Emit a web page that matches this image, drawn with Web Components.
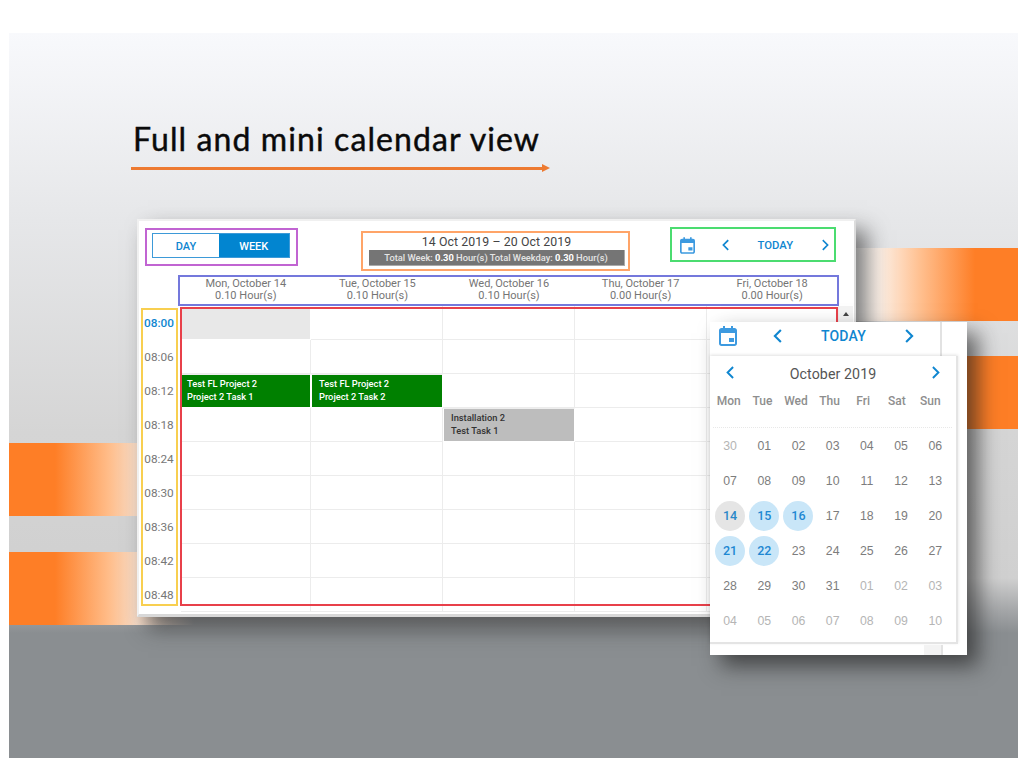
<!DOCTYPE html>
<html>
<head>
<meta charset="utf-8">
<title>Full and mini calendar view</title>
<style>
  html, body { margin: 0; background: #fff; }
  body { width: 1024px; height: 768px; overflow: hidden; font-family: Roboto, "Liberation Sans", sans-serif; }
</style>
</head>
<body>
<slide-frame heading="Full and mini calendar view">
  <week-calendar></week-calendar>
  <mini-calendar></mini-calendar>
</slide-frame>

<script>
const CAL_ICON = `<svg viewBox="0 0 18 20" width="100%" height="100%"><path fill="currentColor" d="M4 0h2v2h6V0h2v2h1.500C16.900 2 18 3.100 18 4.500V17.500C18 18.900 16.900 20 15.500 20h-13C1.100 20 0 18.900 0 17.500V4.500C0 3.100 1.100 2 2.500 2H4zM2 7v10.500c0 .3.200.5.500.5h13c.3 0 .5-.2.500-.5V7zM10 12h5v4h-5z"/></svg>`;
const chevron = (dir) => `<svg viewBox="0 0 10 16" width="100%" height="100%"><path fill="none" stroke="currentColor" stroke-width="2.400" stroke-linecap="square" d="${dir === 'left' ? 'M8 2L2 8l6 6' : 'M2 2l6 6-6 6'}"/></svg>`;

class SlideFrame extends HTMLElement {
  constructor() {
    super();
    this.attachShadow({ mode: 'open' });
  }
  connectedCallback() {
    this.shadowRoot.innerHTML = `
    <style>
      :host { display: block; position: absolute; left: 9px; top: 33px; width: 1009px; height: 725px; overflow: hidden;
        background: linear-gradient(180deg, #f8f9fc 0, #e6e7e9 187px, #d5d5d5 400px, #d0d0d0 545px, #a4a6a8 578px, #8a8e91 600px, #8a8e91 100%); }
      .head { position: relative; padding: 86px 0 0 124px; }
      h1 { margin: 0; font: 400 32px/40px Lato, "Open Sans", sans-serif; color: #0a0a0a; letter-spacing: 1.100px; -webkit-text-stroke: .45px #0a0a0a; }
      .rule { display: flex; align-items: center; width: 419px; margin: 5px 0 0 -2px; }
      .rule i { flex: 1; height: 3px; background: #ed7a31; }
      .rule b { width: 0; height: 0; border-left: 8px solid #ed7a31; border-top: 4px solid transparent; border-bottom: 4px solid transparent; }
      /* the bands sit behind the windows on the slide canvas */
      .band { position: absolute; height: 73px; }
      .r1 { left: 847px; top: 215px; width: 162px; background: linear-gradient(90deg, #fff 0, #fdf0e6 24px, #ffc090 64px, #fe7e26 119px, #fe7e26 100%); }
      .r2 { left: 940px; top: 323px; width: 69px; background: #fe7e26; }
      .l1 { left: 0; top: 410px; width: 135px; background: linear-gradient(90deg, #fe7e26 0, #fe7e26 46px, #ffbd8a 100px, #f7dcc8 128px); }
      .l2 { left: 0; top: 519px; width: 185px; background: linear-gradient(90deg, #fe7e26 0, #fe7e26 46px, #ffbd8a 100px, #f7dcc8 128px, rgba(247,220,200,0) 100%); }
    </style>
    <div class="band r1"></div><div class="band r2"></div><div class="band l1"></div><div class="band l2"></div>
    <div class="head"><h1>${this.getAttribute('heading')}</h1><div class="rule"><i></i><b></b></div></div>
    <slot></slot>`;
  }
}

class WeekCalendar extends HTMLElement {
  constructor() {
    super();
    this.attachShadow({ mode: 'open' });
  }
  connectedCallback() {
    const days = [['Mon, October 14', '0.10'], ['Tue, October 15', '0.10'], ['Wed, October 16', '0.10'], ['Thu, October 17', '0.00'], ['Fri, October 18', '0.00']];
    const times = ['08:00', '08:06', '08:12', '08:18', '08:24', '08:30', '08:36', '08:42', '08:48'];
    const events = {
      '2-0': ['green first', 'Test FL Project 2', 'Project 2 Task 1'],
      '2-1': ['green', 'Test FL Project 2', 'Project 2 Task 2'],
      '3-2': ['grey', 'Installation 2', 'Test Task 1']
    };
    var cells = '';
    times.forEach((t, r) => {
      days.forEach((d, c) => {
        const ev = events[r + '-' + c];
        const cls = r === 0 && c === 0 ? 'cell now' : 'cell';
        cells += `<div class="${cls}">${ev ? `<div class="ev ${ev[0]}">${ev[1]}<br>${ev[2]}</div>` : ''}</div>`;
      });
    });
    this.shadowRoot.innerHTML = `
    <style>
      :host { display: flex; flex-direction: column; position: absolute; left: 128px; top: 186px; width: 719px; height: 398px; box-sizing: border-box;
        background: #fff; border: 2px solid #f0f0f0; border-bottom-width: 3px; border-right-color: #dcdcdc; border-bottom-color: #d8d8d8;
        box-shadow: 11px 11px 20px rgba(40,40,40,.62); color: #757575; font-family: Roboto, "Liberation Sans", sans-serif; }
      .top { display: flex; align-items: flex-start; height: 54px; box-sizing: border-box; padding: 7px 18px 0 6px; }
      .mode { box-sizing: border-box; width: 153px; height: 38px; border: 2px solid #c164d2; padding: 3px 6px 3px 5px; }
      .seg { display: flex; height: 25px; box-sizing: border-box; border: 1px solid #3d9ad8; font-size: 11px; font-weight: 500; padding-top: 1px; }
      .seg span { display: flex; align-items: center; justify-content: center; color: #0f86d0; margin-top: -1px; }
      .seg span:first-child { width: 66px; padding-top: 1px; }
      .seg .on { flex: 1; background: #0285d0; color: #fff; padding-top: 1px; }
      .range { box-sizing: border-box; width: 270px; height: 40px; margin: 3px 0 0 63px; border: 2px solid #ffa468; padding: 2px 3px 0 6px; text-align: center; }
      .range .d { font-size: 12.300px; line-height: 15px; color: #444; letter-spacing: .1px; }
      .range .t { height: 16px; background: #757575; border-right: 1px solid #aaa; border-bottom: 1px solid #aaa; box-sizing: border-box; font-size: 9.300px; font-weight: 500; line-height: 15px; color: #e4e4e4; }
      .range b { color: #fff; }
      .go { box-sizing: border-box; width: 167px; height: 35px; margin: -1px 0 0 40px; border: 2px solid #4bdc70; padding: 1px 5px 0 8px; display: flex; align-items: center; color: #0f86d0; }
      .go .cal { display: flex; width: 15px; height: 17px; color: #3d9ae0; margin-right: 27px; }
      .go .ch { display: flex; width: 7px; height: 12px; }
      .go .today { flex: 1; text-align: center; font-size: 11.300px; font-weight: 500; }
      .daysrow { box-sizing: border-box; height: 31px; width: 661px; margin: 0 0 0 39px; border: 2px solid #7478dc; display: grid; grid-template-columns: repeat(5, 131.600px); font-size: 11px; line-height: 12px; text-align: center; padding-top: 1px; }
      .body { flex: 1; min-height: 0; display: flex; position: relative; }
      .times { width: 42px; box-sizing: border-box; padding-right: 2px; }
      .times div { height: 34px; display: flex; align-items: center; justify-content: center; font-size: 11.800px; color: #777; }
      .times div:first-child { color: #0f86d0; font-weight: 500; }
      .grid { display: grid; grid-template-columns: 130px repeat(4, 132px); grid-auto-rows: 34px; width: 658px; overflow: hidden; }
      .cell { box-sizing: border-box; border-right: 1px solid #ececec; border-bottom: 1px solid #ececec; }
      .cell.now { background: #e8e8e8; border: 0; margin: 1px 1px 1px 1px; }
      .ev { box-sizing: border-box; height: 34px; padding: 2px 0 0 7px; font-size: 9.300px; line-height: 13px; font-weight: 500; margin-right: -1px; border: 1px solid #fff; border-top-color: #eee; }
      .ev.first { padding-left: 5px; }
      .green { background: #008000; color: #fff; }
      .grey { background: #bdbdbd; color: #333; }
      .scroll { width: 14px; background: #f3f3f3; position: relative; }
      .scroll::before { content: ""; position: absolute; left: 4px; top: 6px; border-left: 3px solid transparent; border-right: 3px solid transparent; border-bottom: 4px solid #444; }
      /* annotation outlines over the schedule */
      .yellow { position: absolute; left: 2px; top: 2px; width: 37px; height: 298px; box-sizing: border-box; border: 2px solid #f8cf50; }
      .red { position: absolute; left: 41px; top: 1px; width: 658px; height: 299px; box-sizing: border-box; border: 2px solid #e8404a; }
    </style>
    <div class="top">
      <div class="mode"><div class="seg"><span>DAY</span><span class="on">WEEK</span></div></div>
      <div class="range"><div class="d">14 Oct 2019 – 20 Oct 2019</div><div class="t">Total Week: <b>0.30</b> Hour(s) Total Weekday: <b>0.30</b> Hour(s)</div></div>
      <div class="go"><span class="cal">${CAL_ICON}</span><span class="ch">${chevron('left')}</span><span class="today">TODAY</span><span class="ch">${chevron('right')}</span></div>
    </div>
    <div class="daysrow">${days.map(d => `<div>${d[0]}<br>${d[1]} Hour(s)</div>`).join('')}</div>
    <div class="body">
      <div class="times">${times.map(t => `<div>${t}</div>`).join('')}</div>
      <div class="grid">${cells}</div>
      <div class="scroll"></div>
      <div class="yellow"></div><div class="red"></div>
    </div>`;
  }
}

class MiniCalendar extends HTMLElement {
  constructor() {
    super();
    this.attachShadow({ mode: 'open' });
  }
  connectedCallback() {
    const weekdays = ['Mon', 'Tue', 'Wed', 'Thu', 'Fri', 'Sat', 'Sun'];
    var dates = [];
    dates.push({ n: 30, out: true });
    for (var i = 1; i <= 31; i++) dates.push({ n: i });
    for (var j = 1; j <= 10; j++) dates.push({ n: j, out: true });
    const dayHtml = dates.map((d) => {
      var cls = d.out ? 'out' : '';
      if (!d.out && d.n === 14) cls = 'today';
      if (!d.out && [15, 16, 21, 22].includes(d.n)) cls = 'sel';
      return `<div class="day ${cls}"><span>${String(d.n).padStart(2, '0')}</span></div>`;
    }).join('');
    this.shadowRoot.innerHTML = `
    <style>
      :host { display: block; position: absolute; left: 701px; top: 289px; width: 257px; height: 333px; background: #fff;
        box-shadow: 11px 11px 20px rgba(30,30,30,.65); font-family: Roboto, "Liberation Sans", sans-serif; }
      .nav { width: 232px; height: 34px; box-sizing: border-box; display: flex; align-items: center; padding: 0 26px 6px 9px; color: #0f86d0; border-right: 2px solid #e2e2e2; }
      .nav .cal { display: flex; width: 18px; height: 20px; color: #3d9ae0; margin-right: 36px; }
      .nav .ch { display: flex; width: 9px; height: 14px; }
      .nav .today { flex: 1; text-align: center; font-size: 14px; font-weight: 500; letter-spacing: .2px; }
      .panel { width: 248px; height: 288px; box-sizing: border-box; border-right: 2px solid #e4e4e4; border-bottom: 2px solid #e4e4e4; box-shadow: 0 -1px 3px rgba(0,0,0,.12); padding: 0 4px 0 3px; position: relative; background: #fff; }
      .month { display: flex; align-items: center; justify-content: space-between; height: 35px; padding: 0 12px 3px 13px; box-sizing: border-box; color: #0f86d0; }
      .month .ch { display: flex; width: 8px; height: 13px; }
      .month .label { font-size: 14.200px; color: #555; letter-spacing: .1px; padding-top: 3px; }
      .wds { display: grid; grid-template-columns: repeat(7, 33.600px); height: 19px; margin-left: -1px; }
      .wd { display: flex; align-items: center; justify-content: center; font-size: 12px; font-weight: 500; color: #8e8e8e; }
      .gap { height: 18px; border-bottom: 1px dotted #e8e8e8; box-sizing: border-box; }
      .grid { display: grid; grid-template-columns: repeat(7, 34.200px); }
      .day { height: 35px; display: flex; align-items: center; justify-content: center; font: 12.300px "Liberation Sans", Arial, sans-serif; color: #7d7d7d; }
      .day span { width: 30px; height: 30px; border-radius: 50%; display: flex; align-items: center; justify-content: center; }
      .out { color: #b5b5b5; }
      .today span { background: #e5e5e5; color: #2a88c8; font: 500 12.500px Roboto, sans-serif; }
      .sel span { background: #c9e6f8; color: #1e88d2; font: 500 12.500px Roboto, sans-serif; }
      .strip { position: absolute; left: 214px; bottom: 0; width: 17px; height: 10px; background: #f3f3f3; border-right: 2px solid #e2e2e2; }
    </style>
    <div class="nav"><span class="cal">${CAL_ICON}</span><span class="ch">${chevron('left')}</span><span class="today">TODAY</span><span class="ch">${chevron('right')}</span></div>
    <div class="panel">
      <div class="month"><span class="ch">${chevron('left')}</span><span class="label">October 2019</span><span class="ch">${chevron('right')}</span></div>
      <div class="wds">${weekdays.map(w => `<div class="wd">${w}</div>`).join('')}</div>
      <div class="gap"></div>
      <div class="grid">${dayHtml}</div>
    </div>
    <div class="strip"></div>`;
  }
}

customElements.define('slide-frame', SlideFrame);
customElements.define('week-calendar', WeekCalendar);
customElements.define('mini-calendar', MiniCalendar);
</script>
</body>
</html>
